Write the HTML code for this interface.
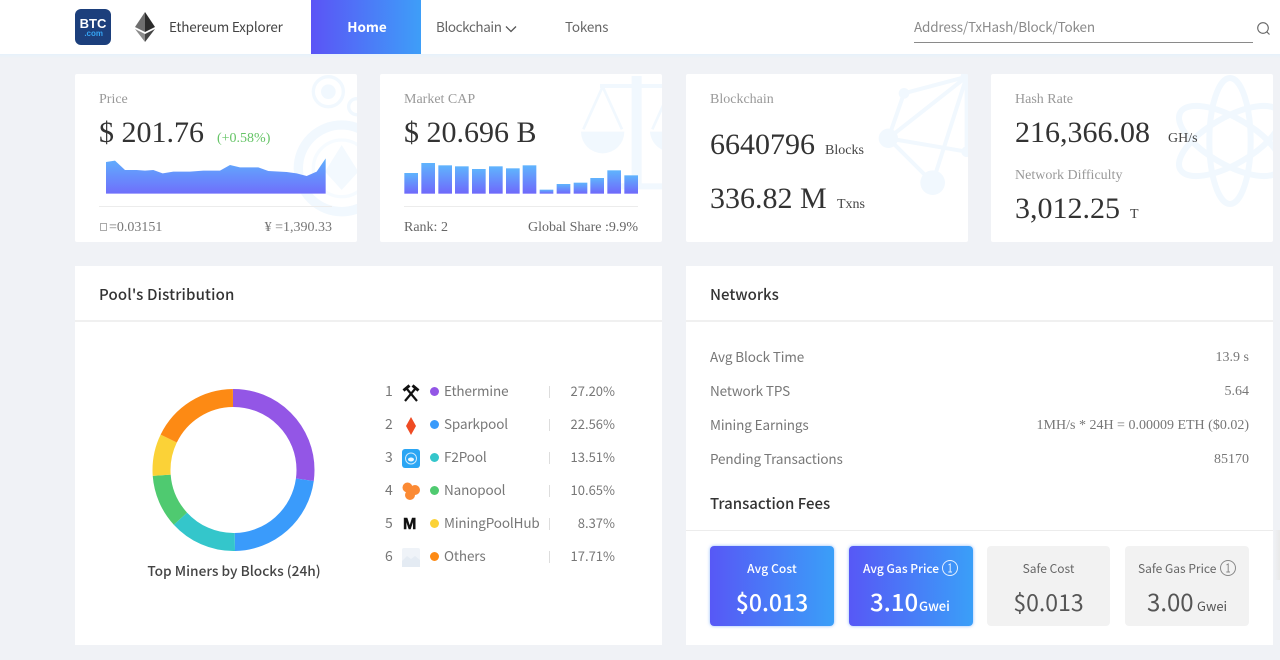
<!DOCTYPE html>
<html><head><meta charset="utf-8"><style>
*{box-sizing:border-box}
html,body{margin:0;padding:0;width:1280px;height:660px;overflow:hidden;background:#f0f2f6}
.a{position:absolute;white-space:nowrap}
.s{font-family:"Liberation Serif",serif}
.n{font-family:"Noto Sans CJK SC","Liberation Sans",sans-serif}
.card{position:absolute;background:#fff;top:74px;width:282px;height:168px;border-radius:2px;overflow:hidden}
.lab{font-size:14px;color:#999;line-height:16px}
.big{font-size:30px;color:#333;line-height:34px}
.unit{font-size:14px;color:#444;line-height:16px}
.panel{position:absolute;background:#fff;top:266px;width:587px;height:379px}
.line{position:absolute;height:1px;background:#ececec}
.rt{font-size:13.5px;color:#777;line-height:18px;letter-spacing:-.12px}
.rv{font-size:14px;color:#777;line-height:18px;text-align:right;right:31px}
.lr{font-size:13.5px;color:#777;line-height:18px;letter-spacing:-.12px}
.dot{position:absolute;width:9px;height:9px;border-radius:50%;left:430px}
.pct{position:absolute;right:665px;font-size:13px;color:#777;line-height:18px}
.sep{position:absolute;left:549px;width:1px;height:12px;background:#ddd}
.fee{position:absolute;top:546px;height:80px;width:124px;border-radius:4px;text-align:center}
.fee.on{background:linear-gradient(90deg,#5758f6,#3a9ff8);color:#fff;box-shadow:0 0 3px rgba(70,140,250,.6)}
.fee.off{background:#f2f2f2;color:#555}
</style></head><body>
<div class="a" style="left:0;top:0;width:1280px;height:54px;background:#fff"></div>
<div class="a" style="left:0;top:54px;width:1280px;height:4px;background:linear-gradient(#e6f1fb,#f0f2f6)"></div>
<div class="a" style="left:75px;top:9px;width:36px;height:36px;border-radius:6px;background:#1c3f7c"></div>
<div class="a" style="left:75px;top:15px;width:36px;text-align:center;color:#fff;font:bold 13px/18px 'Liberation Sans',sans-serif">BTC</div>
<div class="a" style="left:75px;top:29px;width:28px;text-align:right;color:#35a4f4;font:bold 8px/10px 'Liberation Sans',sans-serif">.com</div>
<svg class="a" style="left:135px;top:12px" width="20" height="30" viewBox="0 0 20 30"><polygon points="10,0 0,15 10,20" fill="#6e6e6e"/><polygon points="10,0 20,15 10,20" fill="#2b2b2b"/><polygon points="0,17 10,30 10,22" fill="#8c8c8c"/><polygon points="20,17 10,30 10,22" fill="#444"/></svg>
<div class="a n" style="left:169px;top:17px;font-size:13.5px;line-height:18px;color:#444;letter-spacing:-.2px">Ethereum Explorer</div>
<div class="a" style="left:311px;top:0;width:110px;height:54px;background:linear-gradient(90deg,#5b54f6,#3e9ef8)"></div>
<div class="a n" style="left:312px;width:110px;top:17px;text-align:center;font-size:13.5px;font-weight:700;line-height:18px;color:#fff">Home</div>
<div class="a n" style="left:436px;top:17px;font-size:13.5px;line-height:18px;color:#666;letter-spacing:-.4px">Blockchain</div>
<svg class="a" style="left:505px;top:25px" width="12" height="8" viewBox="0 0 12 8"><path d="M1 1.500L6 6.500L11 1.500" fill="none" stroke="#555" stroke-width="1.300"/></svg>
<div class="a n" style="left:565px;top:17px;font-size:13.5px;line-height:18px;color:#666;letter-spacing:-.2px">Tokens</div>
<div class="a n" style="left:914px;top:17px;font-size:13.5px;line-height:18px;color:#8a8a8a;letter-spacing:-.18px">Address/TxHash/Block/Token</div>
<div class="a" style="left:914px;top:42px;width:339px;height:1px;background:#8a8a8a"></div>
<svg class="a" style="left:1256px;top:21px" width="15" height="15" viewBox="0 0 15 15"><circle cx="7" cy="7" r="5.300" fill="none" stroke="#666" stroke-width="1.100"/><path d="M10.800 10.800L13.500 13.500" stroke="#666" stroke-width="1.100"/></svg>

<!-- card 1 -->
<div class="card" style="left:75px">
<svg class="a" style="left:-5px;top:-4px" width="300" height="175" viewBox="0 0 900 525"><g fill="none" stroke="#f1f8fe"><circle cx="775" cy="65" r="45" stroke-width="10"/><circle cx="860" cy="110" r="24" stroke-width="10"/><circle cx="815" cy="295" r="130" stroke-width="28"/><circle cx="815" cy="295" r="85" stroke-width="10" stroke="#f6fbff"/></g><circle cx="775" cy="65" r="22" fill="#f1f8fe"/><polygon points="815,225 765,305 815,360 865,305" fill="#f3f9fe"/>
<defs><linearGradient id="g1" x1="0" y1="0" x2="0" y2="1"><stop offset="0" stop-color="#5fb0fd"/><stop offset="1" stop-color="#6f6ffb"/></linearGradient></defs>
<polygon fill="url(#g1)" points="108,276 135,272 165,300 200,300 225,302 250,300 278,310 310,305 360,305 400,302 450,302 480,285 510,292 565,292 595,303 650,306 680,310 710,318 740,305 767,265 767,371 108,371"/></svg>
<div class="a s lab" style="left:24px;top:18px">Price</div>
<div class="a s big" style="left:24px;top:42px">$ 201.76</div>
<div class="a s" style="left:142px;top:57px;font-size:14px;line-height:16px;color:#65c466">(+0.58%)</div>
<div class="line" style="left:24px;top:132px;width:233px"></div>
<div class="a s" style="left:25px;top:146px;font-size:14px;line-height:16px;color:#777"><span style="display:inline-block;width:7px;height:8px;border:1px solid #aaa;margin-right:2px"></span>=0.03151</div>
<div class="a s" style="right:25px;top:146px;font-size:14px;line-height:16px;color:#777">¥ =1,390.33</div>
</div>
<!-- card 2 -->
<div class="card" style="left:380px">
<svg class="a" style="left:-5px;top:-4px" width="300" height="175" viewBox="0 0 900 525"><g fill="#f1f8fe"><rect x="770" y="18" width="30" height="330"/><rect x="675" y="42" width="225" height="12"/><rect x="700" y="340" width="200" height="18"/><path d="M618 185H748A65 65 0 0 1 618 185Z"/><path d="M825 185H900V245A65 65 0 0 1 825 185Z"/></g><path d="M683 50L625 178M683 50L741 178M890 50L832 178" stroke="#f1f8fe" stroke-width="8" fill="none"/>
<defs><linearGradient id="g2" x1="0" y1="0" x2="0" y2="1"><stop offset="0" stop-color="#5fb4fd"/><stop offset="1" stop-color="#6f68fb"/></linearGradient></defs>
<g fill="url(#g2)"><rect x="88" y="309" width="41" height="62"/><rect x="139" y="279" width="41" height="92"/><rect x="190" y="286" width="41" height="85"/><rect x="240" y="289" width="41" height="82"/><rect x="291" y="297" width="41" height="74"/><rect x="342" y="289" width="41" height="82"/><rect x="393" y="295" width="41" height="76"/><rect x="443" y="286" width="41" height="85"/><rect x="494" y="359" width="41" height="12"/><rect x="545" y="342" width="41" height="29"/><rect x="596" y="338" width="41" height="33"/><rect x="646" y="324" width="41" height="47"/><rect x="697" y="301" width="41" height="70"/><rect x="748" y="316" width="41" height="55"/></g></svg>
<div class="a s lab" style="left:24px;top:18px">Market CAP</div>
<div class="a s big" style="left:24px;top:42px">$ 20.696 B</div>
<div class="line" style="left:24px;top:132px;width:234px"></div>
<div class="a s" style="left:24px;top:146px;font-size:14px;line-height:16px;color:#666">Rank: 2</div>
<div class="a s" style="right:24px;top:146px;font-size:14px;line-height:16px;color:#666">Global Share :9.9%</div>
</div>
<!-- card 3 -->
<div class="card" style="left:686px">
<svg class="a" style="left:-6px;top:-4px" width="300" height="175" viewBox="0 0 900 525"><g stroke="#f1f8fe" stroke-width="12" fill="none"><path d="M672 70L625 205L758 338L860 20L625 205L860 245M672 70L860 20M860 20V245"/></g><g fill="#f1f8fe"><circle cx="672" cy="70" r="16"/><circle cx="625" cy="205" r="29"/><circle cx="758" cy="338" r="37"/><circle cx="860" cy="245" r="16"/><circle cx="860" cy="20" r="18"/></g></svg>
<div class="a s lab" style="left:24px;top:18px">Blockchain</div>
<div class="a s big" style="left:24px;top:54px">6640796</div>
<div class="a s unit" style="left:139px;top:69px">Blocks</div>
<div class="a s big" style="left:24px;top:108px">336.82 M</div>
<div class="a s unit" style="left:151px;top:123px">Txns</div>
</div>
<!-- card 4 -->
<div class="card" style="left:991px">
<svg class="a" style="left:-11px;top:-4px" width="300" height="175" viewBox="0 0 900 525"><g fill="none" stroke="#f1f8fe" stroke-width="18"><ellipse cx="750" cy="213" rx="62" ry="189"/><ellipse cx="750" cy="213" rx="70" ry="172" transform="rotate(60 750 213)"/><ellipse cx="750" cy="213" rx="70" ry="172" transform="rotate(-60 750 213)"/></g></svg>
<div class="a s lab" style="left:24px;top:18px">Hash Rate</div>
<div class="a s big" style="left:24px;top:42px">216,366.08</div>
<div class="a s unit" style="left:177px;top:57px">GH/s</div>
<div class="a s lab" style="left:24px;top:94px">Network Difficulty</div>
<div class="a s big" style="left:24px;top:118px">3,012.25</div>
<div class="a s unit" style="left:139px;top:133px">T</div>
</div>

<!-- pool panel -->
<div class="panel" style="left:75px"></div>
<div class="a n" style="left:99px;top:285px;font-size:15px;font-weight:500;line-height:20px;color:#333;letter-spacing:.15px">Pool's Distribution</div>
<div class="line" style="left:75px;top:320px;width:587px;height:2px;background:#f0f0f0"></div>
<svg class="a" style="left:143px;top:380px" width="181" height="181" viewBox="0 0 181 181"><g fill="none" stroke-width="18" transform="rotate(-90 90.500 90)">
<circle cx="90.500" cy="90" r="72" pathLength="100" stroke="#9356e6" stroke-dasharray="27.2 72.8" stroke-dashoffset="0"/>
<circle cx="90.500" cy="90" r="72" pathLength="100" stroke="#3a9bfb" stroke-dasharray="22.56 77.44" stroke-dashoffset="-27.2"/>
<circle cx="90.500" cy="90" r="72" pathLength="100" stroke="#34c6cb" stroke-dasharray="13.51 86.49" stroke-dashoffset="-49.76"/>
<circle cx="90.500" cy="90" r="72" pathLength="100" stroke="#4fca70" stroke-dasharray="10.65 89.35" stroke-dashoffset="-63.27"/>
<circle cx="90.500" cy="90" r="72" pathLength="100" stroke="#fbd237" stroke-dasharray="8.37 91.63" stroke-dashoffset="-73.92"/>
<circle cx="90.500" cy="90" r="72" pathLength="100" stroke="#fd8a14" stroke-dasharray="17.71 82.29" stroke-dashoffset="-82.29"/>
</g></svg>
<div class="a n" style="left:75px;width:318px;top:561px;text-align:center;font-size:13.7px;font-weight:500;line-height:18px;color:#444">Top Miners by Blocks (24h)</div>

<div class="a n lr" style="left:385px;top:382px;font-size:14px">1</div><div class="a n lr" style="left:385px;top:415px;font-size:14px">2</div><div class="a n lr" style="left:385px;top:448px;font-size:14px">3</div><div class="a n lr" style="left:385px;top:481px;font-size:14px">4</div><div class="a n lr" style="left:385px;top:514px;font-size:14px">5</div><div class="a n lr" style="left:385px;top:547px;font-size:14px">6</div>

<svg class="a" style="left:402px;top:384px" width="18" height="18" viewBox="0 0 18 18"><path d="M3 17L13 5M15 17L5 5" stroke="#111" stroke-width="2.200"/><path d="M1.500 6.500L7.500 1.500M16.500 6.500L10.500 1.500" stroke="#111" stroke-width="3" fill="none"/></svg>
<svg class="a" style="left:405px;top:417px" width="12" height="18" viewBox="0 0 12 18"><polygon points="6,0 11,9 6,18 1,9" fill="#ef4b23"/></svg>
<div class="a" style="left:402px;top:449px;width:18px;height:19px;border-radius:3px;background:#2ba6f4"></div>
<svg class="a" style="left:402px;top:449px" width="18" height="19" viewBox="0 0 18 19"><circle cx="9" cy="9.500" r="5.500" fill="none" stroke="#cfeafd" stroke-width="1"/><ellipse cx="9" cy="10.500" rx="3" ry="2" fill="#eef8ff"/></svg>
<svg class="a" style="left:402px;top:482px" width="18" height="18" viewBox="0 0 18 18"><g fill="#fb8a34"><circle cx="5.500" cy="5.500" r="5"/><circle cx="13" cy="8" r="5"/><circle cx="8" cy="13" r="5"/></g></svg>
<div class="a" style="left:403px;top:515px;font:900 16px/20px 'Liberation Sans',sans-serif;color:#111;-webkit-text-stroke:.5px #111">M</div>
<svg class="a" style="left:402px;top:548px" width="18" height="19" viewBox="0 0 18 19"><rect width="18" height="19" rx="2" fill="#eff3f8"/><path d="M0 13L5 8L9 11L13 8L18 12V19H0Z" fill="#e4ebf3"/></svg>

<div class="dot" style="top:387px;background:#9356e6"></div><div class="dot" style="top:420px;background:#3a9bfb"></div><div class="dot" style="top:453px;background:#34c6cb"></div><div class="dot" style="top:486px;background:#4fca70"></div><div class="dot" style="top:519px;background:#fbd237"></div><div class="dot" style="top:552px;background:#fd8a14"></div>

<div class="a n lr" style="left:444px;top:381px">Ethermine</div>
<div class="a n lr" style="left:444px;top:414px">Sparkpool</div>
<div class="a n lr" style="left:444px;top:447px">F2Pool</div>
<div class="a n lr" style="left:444px;top:480px">Nanopool</div>
<div class="a n lr" style="left:444px;top:513px">MiningPoolHub</div>
<div class="a n lr" style="left:444px;top:546px">Others</div>

<div class="sep" style="top:386px"></div><div class="sep" style="top:419px"></div><div class="sep" style="top:452px"></div><div class="sep" style="top:485px"></div><div class="sep" style="top:518px"></div><div class="sep" style="top:551px"></div>
<div class="pct n" style="top:382px">27.20%</div><div class="pct n" style="top:415px">22.56%</div><div class="pct n" style="top:448px">13.51%</div><div class="pct n" style="top:481px">10.65%</div><div class="pct n" style="top:514px">8.37%</div><div class="pct n" style="top:547px">17.71%</div>

<!-- networks -->
<div class="panel" style="left:686px"></div>
<div class="a n" style="left:710px;top:285px;font-size:15px;font-weight:500;line-height:20px;color:#333">Networks</div>
<div class="line" style="left:686px;top:320px;width:587px;height:2px;background:#f0f0f0"></div>
<div class="a n rt" style="left:710px;top:347px">Avg Block Time</div>
<div class="a n rt" style="left:710px;top:381px">Network TPS</div>
<div class="a n rt" style="left:710px;top:415px">Mining Earnings</div>
<div class="a n rt" style="left:710px;top:449px">Pending Transactions</div>
<div class="a s rv" style="top:349px">13.9 s</div>
<div class="a s rv" style="top:383px">5.64</div>
<div class="a s rv" style="top:417px">1MH/s * 24H = 0.00009 ETH ($0.02)</div>
<div class="a s rv" style="top:451px">85170</div>
<div class="a n" style="left:710px;top:494px;font-size:15px;font-weight:500;line-height:20px;color:#333">Transaction Fees</div>
<div class="line" style="left:686px;top:530px;width:587px"></div>

<div class="fee on" style="left:710px"></div>
<div class="a n" style="left:710px;width:124px;top:561px;text-align:center;font-size:12px;font-weight:500;line-height:16px;color:#fff;letter-spacing:.1px">Avg Cost</div>
<div class="a n" style="left:710px;width:124px;top:585px;text-align:center;font-size:23px;font-weight:500;line-height:32px;color:#fff">$0.013</div>
<div class="fee on" style="left:849px"></div>
<div class="a n" style="left:863px;top:561px;font-size:12px;font-weight:500;line-height:16px;color:#fff">Avg Gas Price</div>
<svg class="a" style="left:941px;top:559px" width="18" height="18" viewBox="0 0 18 18"><circle cx="9" cy="9" r="7.500" fill="none" stroke="#e4f0ff" stroke-width="1"/><path d="M7.500 6L9.200 5V13M7.300 13H11" fill="none" stroke="#e4f0ff" stroke-width="1"/></svg>
<div class="a n" style="left:870px;top:585px;font-size:24px;font-weight:500;line-height:32px;color:#fff">3.10</div>
<div class="a n" style="left:919px;top:597px;font-size:13px;font-weight:500;line-height:18px;color:#fff">Gwei</div>
<div class="fee off" style="left:987px;width:123px"></div>
<div class="a n" style="left:987px;width:123px;top:561px;text-align:center;font-size:12px;line-height:16px;color:#666">Safe Cost</div>
<div class="a n" style="left:987px;width:123px;top:585px;text-align:center;font-size:23px;line-height:32px;color:#555">$0.013</div>
<div class="fee off" style="left:1125px"></div>
<div class="a n" style="left:1138px;top:561px;font-size:12px;line-height:16px;color:#666">Safe Gas Price</div>
<svg class="a" style="left:1219px;top:559px" width="18" height="18" viewBox="0 0 18 18"><circle cx="9" cy="9" r="7.500" fill="none" stroke="#888" stroke-width="1"/><path d="M7.500 6L9.200 5V13M7.300 13H11" fill="none" stroke="#888" stroke-width="1"/></svg>
<div class="a n" style="left:1147px;top:585px;font-size:24px;line-height:32px;color:#555">3.00</div>
<div class="a n" style="left:1197px;top:597px;font-size:13px;line-height:18px;color:#555">Gwei</div>
<div class="a" style="left:1273px;top:530px;width:7px;height:50px;background:linear-gradient(90deg,#f0f2f6,#e9e9e9)"></div>
</body></html>
